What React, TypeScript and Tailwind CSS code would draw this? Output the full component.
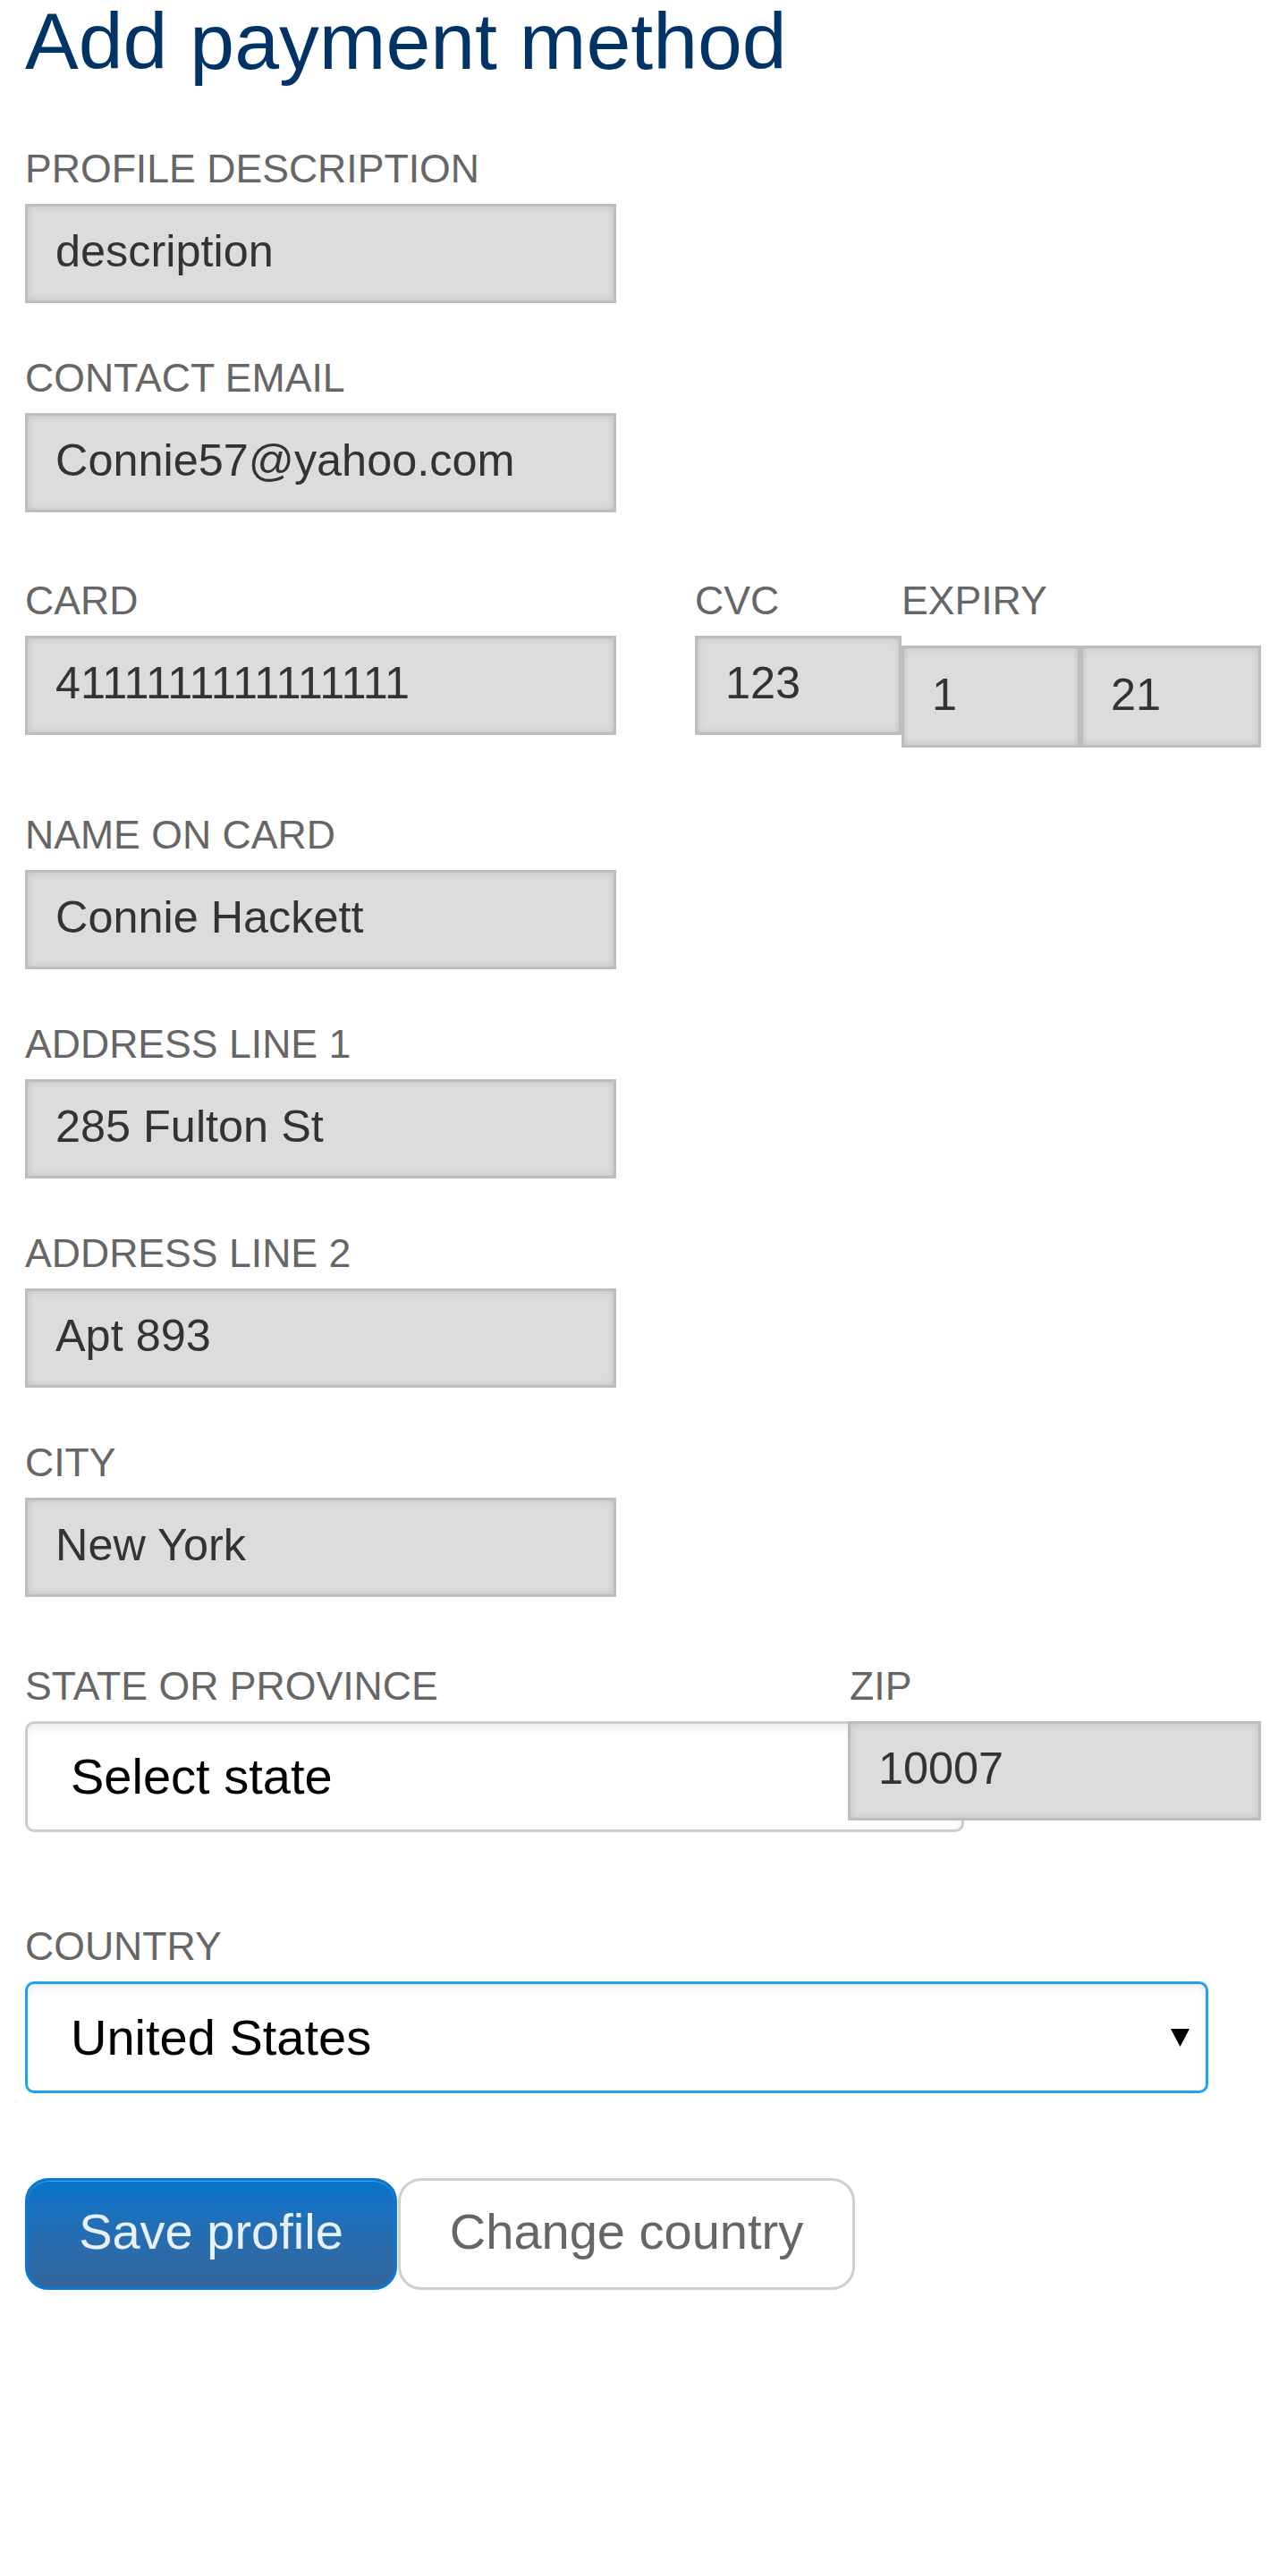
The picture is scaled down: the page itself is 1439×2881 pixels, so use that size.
import React from 'react';

const labelCls = 'block text-[44.6px] leading-[44px] uppercase text-[#666] mb-[17px]';
const inputCls =
  'block h-[111px] border-[3px] border-[#bdbdbd] bg-[#dcdcdc] pl-[31px] pb-[6px] text-[50.4px] text-[#333] shadow-[inset_0_0_8px_rgba(0,0,0,0.12)] outline-none';

const Caret: React.FC = () => (
  <svg width="21" height="20" viewBox="0 0 21 20" className="shrink-0">
    <path d="M0 0 H21 L10.5 20 Z" fill="#000" />
  </svg>
);

interface FieldProps {
  label: string;
  value: string;
  className?: string;
}

const Field: React.FC<FieldProps> = ({ label, value, className = '' }) => (
  <div className={className}>
    <label className={labelCls}>{label}</label>
    <input readOnly value={value} className={`${inputCls} w-[661px]`} />
  </div>
);

export default function App() {
  return (
    <div className="min-h-[2881px] bg-white px-[28px] font-['Liberation_Sans',Arial,sans-serif]">
      <h1 className="pt-[2px] text-[89.6px] leading-[89px] font-normal text-[#003366]">Add payment method</h1>

      <Field label="Profile description" value="description" className="mt-[76px]" />
      <Field label="Contact email" value="Connie57@yahoo.com" className="mt-[62px]" />

      {/* card / cvc / expiry */}
      <div className="mt-[77px] flex items-start">
        <div className="w-[661px] shrink-0">
          <label className={labelCls}>Card</label>
          <input readOnly value="4111111111111111" className={`${inputCls} w-full`} />
        </div>
        <div className="ml-[88px] w-[231px] shrink-0">
          <label className={labelCls}>CVC</label>
          <input readOnly value="123" className={`${inputCls} w-full`} />
        </div>
        <div className="shrink-0">
          <label className={labelCls}>Expiry</label>
          <div className="flex pt-[11px]">
            <input readOnly value="1" className={`${inputCls} h-[114px]! w-[200px]`} />
            <input readOnly value="21" className={`${inputCls} h-[114px]! w-[202px]`} />
          </div>
        </div>
      </div>

      <Field label="Name on card" value="Connie Hackett" className="mt-[76px]" />
      <Field label="Address line 1" value="285 Fulton St" className="mt-[62px]" />
      <Field label="Address line 2" value="Apt 893" className="mt-[62px]" />
      <Field label="City" value="New York" className="mt-[62px]" />

      {/* state / zip */}
      <div className="mt-[78px] flex items-start">
        <div className="w-[920px] shrink-0">
          <label className={labelCls}>State or province</label>
          <div className="flex h-[124px] w-[1050px] items-center justify-between rounded-[10px] border-[3px] border-[#ccc] bg-white pl-[48px] pr-[20px] text-[56px] text-black shadow-[inset_0_5px_8px_rgba(0,0,0,0.07)]">
            <span>Select state</span>
            <Caret />
          </div>
        </div>
        <div className="relative z-10 w-[462px] shrink-0">
          <label className={`${labelCls} pl-[2px]`}>Zip</label>
          <input readOnly value="10007" className={`${inputCls} w-full`} />
        </div>
      </div>

      {/* country */}
      <div className="mt-[106px]">
        <label className={labelCls}>Country</label>
        <div className="flex h-[125px] w-[1323px] items-center justify-between rounded-[10px] border-[3px] border-[#1ca3ec] bg-white pl-[48px] pr-[18px] text-[56px] text-black shadow-[inset_0_5px_8px_rgba(0,0,0,0.07)]">
          <span>United States</span>
          <Caret />
        </div>
      </div>

      <div className="mt-[95px] flex items-start">
        <button className="h-[125px] w-[416px] rounded-[26px] border-[3px] border-[#0b78d2] bg-gradient-to-b from-[#0575cc] to-[#33669a] pb-[6px] text-[56px] text-[#e8f0f8] shadow-[inset_0_1px_0_rgba(255,255,255,0.3)]">
          Save profile
        </button>
        <button className="ml-[1px] h-[125px] w-[511px] rounded-[26px] border-[3px] border-[#cfcfcf] bg-white pb-[6px] text-[56px] text-[#666]">
          Change country
        </button>
      </div>
    </div>
  );
}
